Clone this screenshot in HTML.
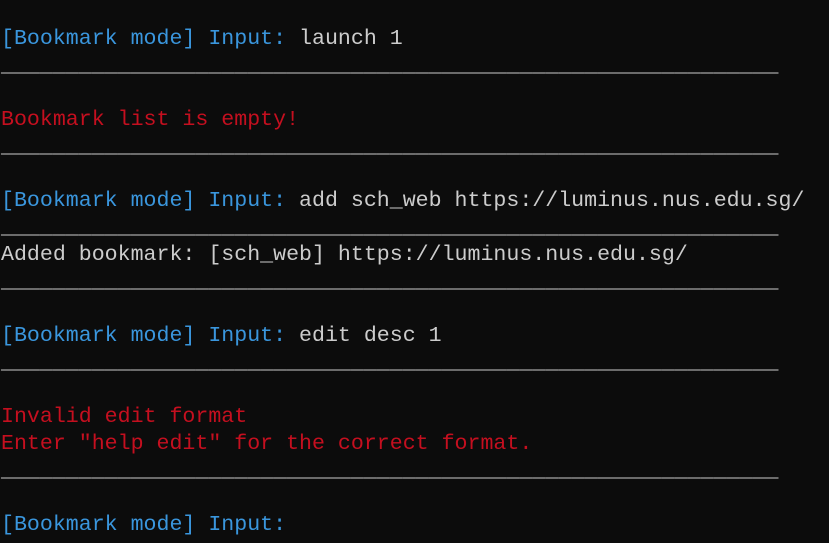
<!DOCTYPE html>
<html><head><meta charset="utf-8"><style>
html,body{margin:0;padding:0;background:#0c0c0c;width:829px;height:543px;overflow:hidden}
pre{margin:0;padding:26px 0 0 1px;font-family:"Liberation Mono",monospace;font-size:21.6px;line-height:27px;color:#cccccc;white-space:pre}
.b{color:#3a96dd}.r{color:#c50f1f}
</style></head><body><pre><span class="b">[Bookmark mode] Input: </span>launch 1
____________________________________________________________

<span class="r">Bookmark list is empty!</span>
____________________________________________________________

<span class="b">[Bookmark mode] Input: </span>add sch_web https://luminus.nus.edu.sg/
____________________________________________________________
Added bookmark: [sch_web] https://luminus.nus.edu.sg/
____________________________________________________________

<span class="b">[Bookmark mode] Input: </span>edit desc 1
____________________________________________________________

<span class="r">Invalid edit format</span>
<span class="r">Enter "help edit" for the correct format.</span>
____________________________________________________________

<span class="b">[Bookmark mode] Input: </span></pre></body></html>
